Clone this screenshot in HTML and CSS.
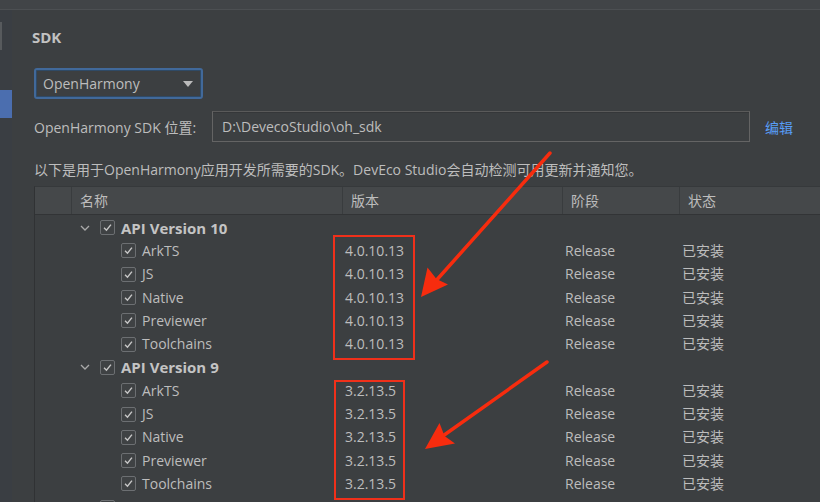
FILE: index.html
```html
<!DOCTYPE html>
<html lang="zh-CN">
<head>
<meta charset="utf-8">
<title>SDK</title>
<link rel="stylesheet" href="styles.css">
</head>
<body>
<div class="topstrip"></div>
<div class="frame">
  <aside class="sidebar">
    <div class="thumb"></div>
    <div class="selected"></div>
  </aside>
  <main class="content">
    <h1 class="title">SDK</h1>
    <div class="combo">
      <span>OpenHarmony</span>
      <svg class="combo-arrow" width="10" height="6" viewBox="0 0 10 6"><path d="M0 0H10L5 6Z" fill="#bbbbbb"/></svg>
    </div>
    <div class="pathrow">
      <label class="pathlabel">OpenHarmony SDK 位置:</label>
      <div class="field">D:\DevecoStudio\oh_sdk</div>
      <a class="edit">编辑</a>
    </div>
    <p class="desc">以下是用于OpenHarmony应用开发所需要的SDK。DevEco Studio会自动检测可用更新并通知您。</p>
    <div class="table">
      <div class="thead">
        <div class="th th-first"></div>
        <div class="th th-name">名称</div>
        <div class="th th-ver">版本</div>
        <div class="th th-stage">阶段</div>
        <div class="th th-status">状态</div>
      </div>
      <div class="tbody">
        <div class="row group">
          <div class="cell tree"><svg class="chev" width="10" height="6" viewBox="0 0 10 6"><path d="M1 1L5 5L9 1" fill="none" stroke="#aaaaaa" stroke-width="1.3"/></svg><span class="cb"><svg viewBox="0 0 15 15"><path d="M3.5 7.8L6.3 10.6L11.5 4.2" fill="none" stroke="#c8c8c8" stroke-width="1.6"/></svg></span><span class="glabel">API Version 10</span></div>
          <div class="cell"></div><div class="cell"></div><div class="cell"></div>
        </div>
        <div class="row child">
          <div class="cell tree"><span class="cb"><svg viewBox="0 0 15 15"><path d="M3.5 7.8L6.3 10.6L11.5 4.2" fill="none" stroke="#c8c8c8" stroke-width="1.6"/></svg></span><span>ArkTS</span></div>
          <div class="cell">4.0.10.13</div><div class="cell">Release</div><div class="cell">已安装</div>
        </div>
        <div class="row child">
          <div class="cell tree"><span class="cb"><svg viewBox="0 0 15 15"><path d="M3.5 7.8L6.3 10.6L11.5 4.2" fill="none" stroke="#c8c8c8" stroke-width="1.6"/></svg></span><span>JS</span></div>
          <div class="cell">4.0.10.13</div><div class="cell">Release</div><div class="cell">已安装</div>
        </div>
        <div class="row child">
          <div class="cell tree"><span class="cb"><svg viewBox="0 0 15 15"><path d="M3.5 7.8L6.3 10.6L11.5 4.2" fill="none" stroke="#c8c8c8" stroke-width="1.6"/></svg></span><span>Native</span></div>
          <div class="cell">4.0.10.13</div><div class="cell">Release</div><div class="cell">已安装</div>
        </div>
        <div class="row child">
          <div class="cell tree"><span class="cb"><svg viewBox="0 0 15 15"><path d="M3.5 7.8L6.3 10.6L11.5 4.2" fill="none" stroke="#c8c8c8" stroke-width="1.6"/></svg></span><span>Previewer</span></div>
          <div class="cell">4.0.10.13</div><div class="cell">Release</div><div class="cell">已安装</div>
        </div>
        <div class="row child">
          <div class="cell tree"><span class="cb"><svg viewBox="0 0 15 15"><path d="M3.5 7.8L6.3 10.6L11.5 4.2" fill="none" stroke="#c8c8c8" stroke-width="1.6"/></svg></span><span>Toolchains</span></div>
          <div class="cell">4.0.10.13</div><div class="cell">Release</div><div class="cell">已安装</div>
        </div>
        <div class="row group">
          <div class="cell tree"><svg class="chev" width="10" height="6" viewBox="0 0 10 6"><path d="M1 1L5 5L9 1" fill="none" stroke="#aaaaaa" stroke-width="1.3"/></svg><span class="cb"><svg viewBox="0 0 15 15"><path d="M3.5 7.8L6.3 10.6L11.5 4.2" fill="none" stroke="#c8c8c8" stroke-width="1.6"/></svg></span><span class="glabel">API Version 9</span></div>
          <div class="cell"></div><div class="cell"></div><div class="cell"></div>
        </div>
        <div class="row child">
          <div class="cell tree"><span class="cb"><svg viewBox="0 0 15 15"><path d="M3.5 7.8L6.3 10.6L11.5 4.2" fill="none" stroke="#c8c8c8" stroke-width="1.6"/></svg></span><span>ArkTS</span></div>
          <div class="cell">3.2.13.5</div><div class="cell">Release</div><div class="cell">已安装</div>
        </div>
        <div class="row child">
          <div class="cell tree"><span class="cb"><svg viewBox="0 0 15 15"><path d="M3.5 7.8L6.3 10.6L11.5 4.2" fill="none" stroke="#c8c8c8" stroke-width="1.6"/></svg></span><span>JS</span></div>
          <div class="cell">3.2.13.5</div><div class="cell">Release</div><div class="cell">已安装</div>
        </div>
        <div class="row child">
          <div class="cell tree"><span class="cb"><svg viewBox="0 0 15 15"><path d="M3.5 7.8L6.3 10.6L11.5 4.2" fill="none" stroke="#c8c8c8" stroke-width="1.6"/></svg></span><span>Native</span></div>
          <div class="cell">3.2.13.5</div><div class="cell">Release</div><div class="cell">已安装</div>
        </div>
        <div class="row child">
          <div class="cell tree"><span class="cb"><svg viewBox="0 0 15 15"><path d="M3.5 7.8L6.3 10.6L11.5 4.2" fill="none" stroke="#c8c8c8" stroke-width="1.6"/></svg></span><span>Previewer</span></div>
          <div class="cell">3.2.13.5</div><div class="cell">Release</div><div class="cell">已安装</div>
        </div>
        <div class="row child">
          <div class="cell tree"><span class="cb"><svg viewBox="0 0 15 15"><path d="M3.5 7.8L6.3 10.6L11.5 4.2" fill="none" stroke="#c8c8c8" stroke-width="1.6"/></svg></span><span>Toolchains</span></div>
          <div class="cell">3.2.13.5</div><div class="cell">Release</div><div class="cell">已安装</div>
        </div>
        <div class="row group">
          <div class="cell tree"><span class="chev-space"></span><span class="cb"></span></div>
          <div class="cell"></div><div class="cell"></div><div class="cell"></div>
        </div>
      </div>
    </div>
  </main>
</div>
<div class="mark mark-a"></div>
<div class="mark mark-b"></div>
<svg class="arrows" width="820" height="502" viewBox="0 0 820 502">
  <path d="M550 153L434 283" stroke="#f72c0e" stroke-width="3.5" stroke-linecap="round" fill="none"/>
  <path d="M421 297L427.5 267.5L436.5 279L448 284.5Z" fill="#f72c0e"/>
  <path d="M547 362L440 438" stroke="#f72c0e" stroke-width="3.5" stroke-linecap="round" fill="none"/>
  <path d="M425 449L439.5 423L444.5 436L455 443.5Z" fill="#f72c0e"/>
</svg>
</body>
</html>
```

FILE: styles.css
```css
* { box-sizing: border-box; }

html, body {
  margin: 0;
  padding: 0;
}

body {
  width: 820px;
  height: 502px;
  overflow: hidden;
  background: #3c3f41;
  color: #bdbdbd;
  font-family: "Open Sans", "Noto Sans CJK SC", sans-serif;
  font-size: 14px;
  position: relative;
}

.topstrip {
  height: 10px;
  background: #414447;
  border-bottom: 1px solid #4c4f52;
}

.frame {
  display: flex;
  height: 492px;
}

.sidebar {
  width: 12px;
  flex: none;
  background: #3a3e43;
  display: flex;
  flex-direction: column;
}

.thumb {
  width: 2px;
  height: 28px;
  margin-top: 12px;
  background: #575a5d;
}

.selected {
  margin-top: 40px;
  height: 28px;
  background: #4b6eaf;
}

.content {
  flex: 1;
  min-width: 0;
  overflow: hidden;
  padding: 17px 0 0 22px;
}

.title {
  margin: 0 0 0 -2px;
  font-size: 15px;
  font-weight: 700;
  line-height: 20px;
  color: #c2c2c2;
}

.combo {
  margin-top: 21px;
  width: 169px;
  height: 31px;
  border: 2px solid #41699a;
  border-radius: 3px;
  background: #3c3f41;
  box-shadow: inset 0 0 0 1px #2f4a66;
  display: flex;
  align-items: center;
  justify-content: space-between;
  padding: 0 8px 0 7px;
  line-height: 20px;
}

.combo-arrow { display: block; margin-top: 1px; }

.pathrow {
  margin-top: 12px;
  display: flex;
  align-items: center;
  height: 31px;
}

.pathlabel {
  width: 178px;
  flex: none;
}

.field {
  width: 538px;
  height: 31px;
  border: 1px solid #646464;
  border-top-color: #5a5a5a;
  box-shadow: inset 0 1px 0 #353739;
  background: #3c3f41;
  padding: 0 9px;
  display: flex;
  align-items: center;
}

.edit {
  margin-left: 15px;
  color: #589df6;
}

.desc {
  margin: 18px 0 0 0;
  line-height: 20px;
  white-space: nowrap;
}

.table {
  margin-top: 6px;
  width: 800px;
  border-left: 1px solid #303234;
  border-top: 1px solid #36393b;
}

.thead {
  display: grid;
  grid-template-columns: 36px 271px 220px 117px 1fr;
  height: 28px;
  background: #45484a;
  border-bottom: 1px solid #323436;
}

.th {
  display: flex;
  align-items: center;
  padding-left: 8px;
  border-left: 1px solid #393c3e;
  line-height: 20px;
}

.th-first { border-left: none; }

.tbody {
  height: 300px;
  padding-top: 1px;
  overflow: hidden;
}

.row {
  display: grid;
  grid-template-columns: 307px 220px 117px 1fr;
  height: 23.3px;
  align-items: center;
}

.cell {
  padding-left: 3px;
  line-height: 20px;
  white-space: nowrap;
}

.cell.tree {
  display: flex;
  align-items: center;
  padding-left: 0;
}

.group .tree { padding-left: 45px; }
.child .tree { padding-left: 86px; }

.chev {
  display: block;
  margin-right: 10px;
}

.chev-space {
  width: 10px;
  height: 6px;
  margin-right: 10px;
  flex: none;
}

.cb {
  width: 15px;
  height: 15px;
  border: 1px solid #6c6f72;
  border-radius: 2px;
  background: #3f4244;
  margin-right: 6px;
  flex: none;
  display: block;
}

.cb svg {
  display: block;
  width: 13px;
  height: 13px;
}

.glabel {
  font-weight: 700;
  font-size: 15px;
  color: #c4c4c4;
}

.mark {
  position: absolute;
  border: 2px solid #f0301a;
}

.mark-a {
  left: 333px;
  top: 235px;
  width: 82px;
  height: 125px;
}

.mark-b {
  left: 334px;
  top: 380px;
  width: 71px;
  height: 120px;
}

.arrows {
  position: absolute;
  left: 0;
  top: 0;
  pointer-events: none;
}
```
